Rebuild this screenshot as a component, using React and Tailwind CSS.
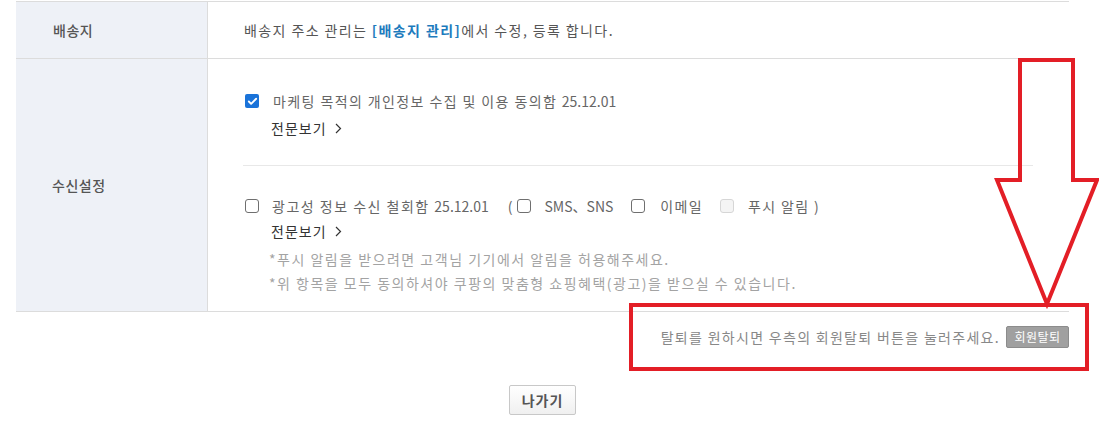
import { Check } from 'lucide-react';

const font = { fontFamily: '"Noto Sans CJK KR", "Noto Sans", sans-serif' };

function Box({ checked, disabled }) {
  if (checked) {
    return (
      <span className="flex h-[14px] w-[14px] shrink-0 items-center justify-center rounded-[2px] bg-[#1a73d9]">
        <Check className="h-[11px] w-[11px] text-white" strokeWidth={4} />
      </span>
    );
  }
  if (disabled) {
    return <span className="block h-[14px] w-[14px] shrink-0 rounded-[3px] border border-[#d6d6d6] bg-[#f4f4f4]" />;
  }
  return <span className="block h-[14px] w-[14px] shrink-0 rounded-[3px] border border-[#6f6f6f] bg-white" />;
}

function More() {
  return (
    <div className="ml-[28px] flex h-5 items-center gap-[8px] text-[14px] tracking-[1px] text-[#333]">
      전문보기
      <svg width="7" height="11" viewBox="0 0 7 11" fill="none" stroke="#333" strokeWidth="1.2">
        <path d="M1 1l4.5 4.5L1 10" />
      </svg>
    </div>
  );
}

export default function App() {
  return (
    <div className="relative h-[447px] w-[1099px] overflow-hidden bg-white" style={font}>
      {/* table */}
      <div className="ml-[16px] mt-px w-[1053px] border-t border-[#dcdcdc]">
        <div className="flex border-b border-[#dcdcdc]">
          <div className="flex h-[56px] w-[192px] shrink-0 items-center border-r border-[#dcdcdc] bg-[#eef1f7] pl-[37px] text-[14px] font-medium tracking-[0.5px] text-[#555]">
            배송지
          </div>
          <div className="flex items-center pl-[36px] text-[14px] tracking-[1.4px] text-[#555]">
            배송지 주소 관리는&nbsp;<span className="font-bold text-[#1d7bbd]">[배송지 관리]</span>에서 수정, 등록 합니다.
          </div>
        </div>

        <div className="flex border-b border-[#dcdcdc]">
          <div className="flex w-[192px] shrink-0 items-center border-r border-[#dcdcdc] bg-[#eef1f7] pl-[36px] text-[14px] font-medium tracking-[0.5px] text-[#555]">
            수신설정
          </div>
          <div className="flex-1 pl-[35px] pr-[36px]">
            <div className="border-b border-[#e8e8e8] pb-[27px] pt-[32px]">
              <div className="flex h-5 items-center gap-[14px] pl-[2px] text-[14px] text-[#666]">
                <Box checked />
                <span className="tracking-[1.4px]">
                  마케팅 목적의 개인정보 수집 및 이용 동의함 <span className="tracking-normal">25.12.01</span>
                </span>
              </div>
              <div className="mt-[7px]">
                <More />
              </div>
            </div>
            <div className="pb-[16px] pt-[30px]">
              <div className="flex h-5 items-center pl-[2px] text-[14px] text-[#666]">
                <Box />
                <span className="ml-[13px] tracking-[1.5px]">
                  광고성 정보 수신 철회함 <span className="tracking-normal">25.12.01</span>
                </span>
                <span className="ml-[19px]">(</span>
                <span className="ml-[5px]"><Box /></span>
                <span className="ml-[13px]">SMS、SNS</span>
                <span className="ml-[18px]"><Box /></span>
                <span className="ml-[15px] tracking-[1.3px]">이메일</span>
                <span className="ml-[17px]"><Box disabled /></span>
                <span className="ml-[14px] tracking-[1.4px]">푸시 알림 )</span>
              </div>
              <div className="mt-[5px]">
                <More />
              </div>
              <div className="ml-[26px] mt-[6px] text-[14px] leading-6 tracking-[1.5px] text-[#a3a3a3]">
                <p>*푸시 알림을 받으려면 고객님 기기에서 알림을 허용해주세요.</p>
                <p>*위 항목을 모두 동의하셔야 쿠팡의 맞춤형 쇼핑혜택(광고)을 받으실 수 있습니다.</p>
              </div>
            </div>
          </div>
        </div>

        <div className="flex items-center justify-end gap-[6px] pt-[14px] text-[14px] text-[#888]">
          <span className="tracking-[1.3px]">탈퇴를 원하시면 우측의 회원탈퇴 버튼을 눌러주세요.</span>
          <button className="h-[22px] w-[63px] rounded-[2px] border border-[#8c8c8c] bg-[#a0a0a0] text-[12px] tracking-[0.5px] text-white">
            회원탈퇴
          </button>
        </div>

        <div className="mt-[37px] flex justify-center">
          <button className="h-[30px] w-[67px] rounded-[2px] border border-[#c8c8c8] bg-gradient-to-b from-white to-[#f0f0f0] text-[14px] font-bold tracking-[1px] text-[#555]">
            나가기
          </button>
        </div>
      </div>

      {/* red annotation overlay */}
      <svg className="pointer-events-none absolute left-0 top-0" width="1099" height="447">
        <polygon
          points="1020,60 1073,60 1073,180 1097,180 1047,304 997,180 1020,180"
          fill="none"
          stroke="#e31e26"
          strokeWidth="4"
          strokeLinejoin="miter"
        />
        <rect x="631" y="305" width="456" height="64" fill="none" stroke="#e31e26" strokeWidth="4" />
      </svg>
    </div>
  );
}
